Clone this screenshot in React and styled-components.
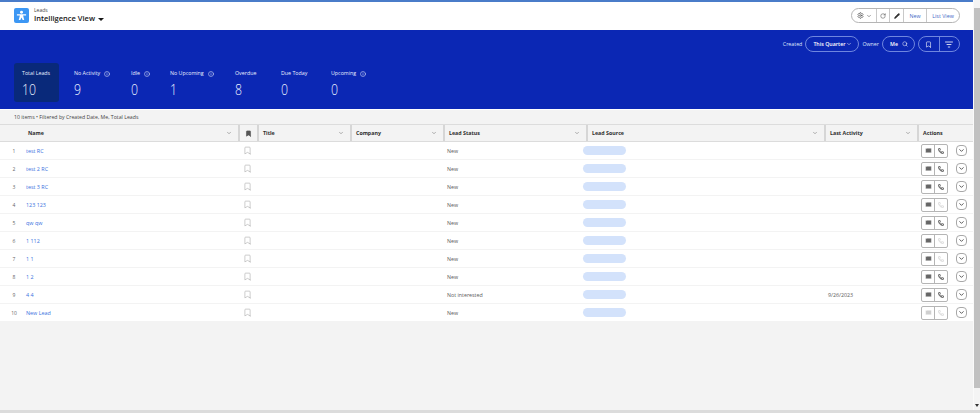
import React from 'react';
import styled, { createGlobalStyle } from 'styled-components';
import { Settings, ChevronDown, RotateCw, Pencil, Search, Bookmark, Mail, Phone, Info } from 'lucide-react';

const Global = createGlobalStyle`
  html, body { margin: 0; padding: 0; height: 100%; background: #f3f3f3; overflow: hidden; }
  * { box-sizing: border-box; }
  body { font-family: "Open Sans", "Liberation Sans", sans-serif; }
`;

const Page = styled.div`
  width: 980px; height: 413px; display: flex; flex-direction: column; background: #f3f3f3;
`;
const Body = styled.div`flex: 1; min-height: 0; display: flex;`;
const Main = styled.main`width: 973px; flex: none; display: flex; flex-direction: column;`;
const Scrollbar = styled.div`
  flex: 1; background: #f4f4f4; border-left: 1px solid #fafafa; padding: 8px 0 22px; display: flex; position: relative;
`;
const Thumb = styled.div`flex: 1; background: #c1c1c1;`;
const ScrollArrow = styled.span`
  position: absolute; left: 1px; bottom: 3px; width: 0; height: 0;
  border-left: 2.5px solid transparent; border-right: 2.5px solid transparent; border-top: 3px solid #333;
`;
const BottomBar = styled.div`height: 3px; flex: none; background: #dcdcdc;`;
const TopLine = styled.div`height: 2px; background: #4a7cc9; flex: none;`;
const Header = styled.header`
  height: 28px; flex: none; background: #fff; display: flex; align-items: center; justify-content: space-between;
  padding: 0 13px 1px 14px;
`;
const TitleGroup = styled.div`display: flex; align-items: center; gap: 5px;`;
const AppIcon = styled.div`
  width: 15px; height: 15px; border-radius: 2px; background: #3c97f4; color: #fff; display: flex; align-items: center; justify-content: center;
`;
const TitleText = styled.div`display: flex; flex-direction: column; line-height: 1;`;
const Crumb = styled.span`font-size: 5px; color: #444; margin-bottom: 2px;`;
const ViewName = styled.span`font-size: 7.5px; font-weight: 600; color: #181818; display: flex; align-items: center; gap: 3px;`;
const Caret = styled.span`width: 0; height: 0; border-left: 3px solid transparent; border-right: 3px solid transparent; border-top: 3.5px solid #181818;`;
const BtnGroup = styled.div`
  display: flex; width: 109px; height: 15px; border: 1px solid #b5b5b5; border-radius: 8px; background: #fff; overflow: hidden;
`;
const Btn = styled.div`
  width: ${p => p.$w}px; flex: none; display: flex; align-items: center; justify-content: center; gap: 2px; font-size: 5.3px; color: #3f68c6; white-space: nowrap;
  border-left: ${p => (p.$first ? 'none' : '1px solid #c9c9c9')};
`;
const Banner = styled.section`
  height: 79px; flex: none; background: #0b27b4; display: flex; flex-direction: column; justify-content: space-between; padding: 6px 13px 7px 14px;
`;
const Filters = styled.div`display: flex; justify-content: flex-end; align-items: center; gap: 3px; color: #dfe6fb; font-size: 5.3px;`;
const Pill = styled.div`
  height: 16px; width: ${p => p.$w}px; border: 1px solid #6f86df; border-radius: 8px; color: #fff; display: flex; align-items: center; justify-content: space-between; padding: 0 6px 0 7px; font-size: 5.3px; font-weight: 600; white-space: nowrap;
`;
const SplitPill = styled.div`
  height: 16px; width: 42px; border: 1px solid #6f86df; border-radius: 8px; color: #fff; display: flex; align-items: stretch;
`;
const SplitCell = styled.div`
  flex: 1; display: flex; align-items: center; justify-content: center;
  & + & { border-left: 1px solid #6f86df; }
`;
const Stats = styled.div`display: flex; align-items: stretch;`;
const Stat = styled.div`
  width: ${p => p.$w}px; flex: none; height: 39px; border-radius: 3px; padding: 7px 0 0 ${p => (p.$active ? 8 : 0)}px; color: #eaf0ff;
  margin-right: ${p => (p.$active ? 15 : 0)}px;
  background: ${p => (p.$active ? '#09297a' : 'transparent')};
`;
const StatLabel = styled.div`font-size: 5.3px; line-height: 7px; display: flex; align-items: center; gap: 4px; white-space: nowrap;`;
const StatValue = styled.div`font-size: 15px; line-height: 16px; margin-top: 4px; font-weight: 300; transform: scaleX(.82); transform-origin: left;`;
const StatusBar = styled.div`
  height: 15px; flex: none; border-top: 1px solid #fff; display: flex; align-items: center; padding-left: 14px; font-size: 5.2px; color: #444;
`;
const Table = styled.div`display: flex; flex-direction: column; background: #fff;`;
const cols = '26px 212px 19px 93px 93px 143px 238px 93px 56px';
const HeadRow = styled.div`
  display: grid; grid-template-columns: ${cols}; height: 18px; background: #f3f3f3;
  border-top: 1px solid #dcdcdc; border-bottom: 1px solid #dcdcdc;
`;
const HeadCell = styled.div`
  display: flex; align-items: center; justify-content: ${p => (p.$center ? 'center' : 'space-between')};
  padding: 0 6px 0 ${p => p.$pl ?? 4}px;
  font-size: 5.3px; font-weight: 700; color: #2e2e2e;
  border-left: ${p => (p.$sep ? '2px solid #d6d6d6' : 'none')};
`;
const BookHead = styled(HeadCell)`padding: 0; border-right: 2px solid #d6d6d6; margin-right: -2px;`;
const Row = styled.div`
  display: grid; grid-template-columns: ${cols}; height: 18px; border-bottom: 1px solid #f3f3f3; align-items: center;
`;
const Num = styled.div`font-size: 5px; color: #666; text-align: center; padding-left: 2px;`;
const NameCell = styled.div`font-size: 5.4px; color: #3b72e0;`;
const Marker = styled.div`display: flex; justify-content: center; color: #a5a5a5;`;
const Cell = styled.div`font-size: 5.3px; color: #5a5a5a; padding-left: 4px;`;
const SourcePill = styled.div`width: 43px; height: 9px; border-radius: 5px; background: #d3e2fb; margin-left: -3px;`;
const Actions = styled.div`display: flex; align-items: center; padding-left: 4px; gap: 8px;`;
const ActionPair = styled.div`display: flex; width: 27px; height: 14px; border: 1px solid #b5b5b5; border-radius: 2px;`;
const ActionBtn = styled.div`
  flex: 1; display: flex; align-items: center; justify-content: center; color: ${p => (p.$off ? '#cfcfcf' : p.$tone)};
  & + & { border-left: 1px solid #b5b5b5; }
`;
const RoundBtn = styled.div`
  width: 11px; height: 11px; border: 1px solid #a8a8a8; border-radius: 4px; display: flex; align-items: center; justify-content: center; color: #222;
`;

const heads = [['Title'], ['Company'], ['Lead Status'], ['Lead Source'], ['Last Activity']];
const stats = [
  { label: 'No Activity', value: 9, w: 57, info: true },
  { label: 'Idle', value: 0, w: 39, info: true },
  { label: 'No Upcoming', value: 1, w: 65, info: true },
  { label: 'Overdue', value: 8, w: 46 },
  { label: 'Due Today', value: 0, w: 50 },
  { label: 'Upcoming', value: 0, w: 60, info: true },
];
const rows = [
  ['test RC', 'New', '', 0, 0], ['test 2 RC', 'New', '', 0, 0], ['test 3 RC', 'New', '', 0, 0], ['123 123', 'New', '', 0, 1], ['qw qw', 'New', '', 0, 0],
  ['1 112', 'New', '', 0, 1], ['1 1', 'New', '', 0, 1], ['1 2', 'New', '', 0, 0], ['4 4', 'Not interested', '9/26/2023', 0, 0], ['New Lead', 'New', '', 1, 1],
];

const FilterLines = () => (
  <svg width="8" height="7" viewBox="0 0 16 14" fill="none" stroke="#fff" strokeWidth="1.6" strokeLinecap="round">
    <path d="M1 2h14M4 7h8M6.5 12h3" />
  </svg>
);

export default function App() {
  return (
    <Page>
      <Global />
      <Body>
        <Main>
          <TopLine />
          <Header>
            <TitleGroup>
              <AppIcon>
                <svg width="11" height="11" viewBox="0 0 24 24" fill="#fff"><circle cx="12" cy="5" r="3.2" /><path d="M2 9h20v3h-6.5l2.5 10h-3.5L12 16.5 9.5 22H6l2.5-10H2z" /></svg>
              </AppIcon>
              <TitleText>
                <Crumb>Leads</Crumb>
                <ViewName>Intelligence View <Caret /></ViewName>
              </TitleText>
            </TitleGroup>
            <BtnGroup>
              <Btn $first $w={24}><Settings size={7} color="#444" /><ChevronDown size={6} color="#444" /></Btn>
              <Btn $w={13}><RotateCw size={6} color="#444" /></Btn>
              <Btn $w={14}><Pencil size={6} color="#333" fill="#333" /></Btn>
              <Btn $w={23}>New</Btn>
              <Btn $w={33}>List View</Btn>
            </BtnGroup>
          </Header>
          <Banner>
            <Filters>
              <span>Created</span>
              <Pill $w={54}>This Quarter <ChevronDown size={6} /></Pill>
              <span>Owner</span>
              <Pill $w={33}>Me <Search size={6} /></Pill>
              <SplitPill>
                <SplitCell><Bookmark size={7} /></SplitCell>
                <SplitCell><FilterLines /></SplitCell>
              </SplitPill>
            </Filters>
            <Stats>
              <Stat $active $w={45}>
                <StatLabel>Total Leads</StatLabel>
                <StatValue>10</StatValue>
              </Stat>
              {stats.map(s => (
                <Stat key={s.label} $w={s.w}>
                  <StatLabel>{s.label} {s.info && <Info size={6} />}</StatLabel>
                  <StatValue>{s.value}</StatValue>
                </Stat>
              ))}
            </Stats>
          </Banner>
          <StatusBar>10 items • Filtered by Created Date, Me, Total Leads</StatusBar>
          <Table>
            <HeadRow>
              <div />
              <HeadCell $pl={2}><span>Name</span><ChevronDown size={6} color="#666" /></HeadCell>
              <BookHead $sep $center><Bookmark size={7} fill="#555" color="#555" /></BookHead>
              {heads.map(([t]) => (
                <HeadCell key={t} $sep><span>{t}</span><ChevronDown size={6} color="#666" /></HeadCell>
              ))}
              <HeadCell $sep><span>Actions</span></HeadCell>
            </HeadRow>
            {rows.map((r, i) => (
              <Row key={i}>
                <Num>{i + 1}</Num>
                <NameCell>{r[0]}</NameCell>
                <Marker><Bookmark size={9} strokeWidth={1.5} /></Marker>
                <div />
                <div />
                <Cell>{r[1]}</Cell>
                <div><SourcePill /></div>
                <Cell>{r[2]}</Cell>
                <Actions>
                  <ActionPair>
                    <ActionBtn $off={r[3]} $tone="#666"><Mail size={7} fill="currentColor" stroke="#fff" strokeWidth={1.5} /></ActionBtn>
                    <ActionBtn $off={r[4]} $tone="#222"><Phone size={6} strokeWidth={2.6} /></ActionBtn>
                  </ActionPair>
                  <RoundBtn><ChevronDown size={7} strokeWidth={2.5} /></RoundBtn>
                </Actions>
              </Row>
            ))}
          </Table>
        </Main>
        <Scrollbar>
          <Thumb />
          <ScrollArrow />
        </Scrollbar>
      </Body>
      <BottomBar />
    </Page>
  );
}
